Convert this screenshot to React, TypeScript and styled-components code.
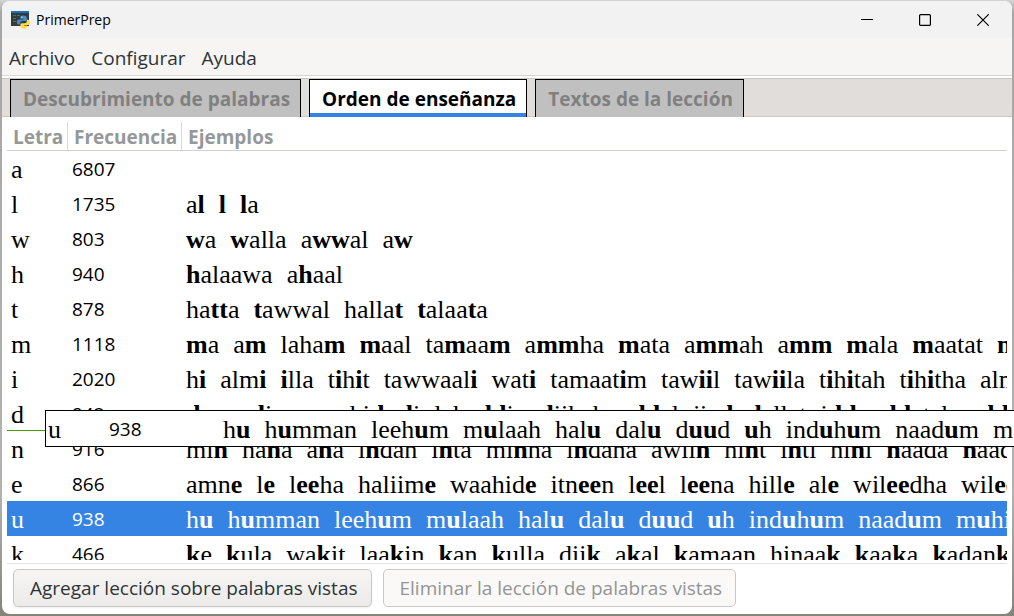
import React from 'react';
import styled, { createGlobalStyle, css } from 'styled-components';

const sans = '"Open Sans", "Noto Sans", sans-serif';
const serif = '"Liberation Serif", "Times New Roman", serif';

const GlobalStyle = createGlobalStyle`
  * { box-sizing: border-box; }
  body { margin: 0; background: #a3a3a1; font-family: ${sans}; overflow: hidden; }
  button { font-family: inherit; margin: 0; }
`;

const Desktop = styled.div`
  position: relative;
  display: flex;
  height: 100vh;
  padding: 1px 2px 2px 2px;
  overflow: hidden;
  background: linear-gradient(#d4d4d4, #a6a6a6 12px, #b2b2b2 80%, #85847b);
`;

const Window = styled.div`
  flex: 1;
  min-width: 0;
  display: flex;
  flex-direction: column;
  overflow: hidden;
  border-radius: 8px;
  background: #ffffff;
`;

const TitleBar = styled.header`
  display: flex;
  align-items: center;
  flex: none;
  height: 37px;
  padding-left: 9px;
  background: #f2f2f2;
`;

const Title = styled.h1`
  flex: 1;
  margin: 0 0 0 6px;
  font-size: 14px;
  line-height: 20px;
  font-weight: 400;
  color: #000000;
`;

const WindowButton = styled.button`
  display: flex;
  align-items: center;
  justify-content: center;
  width: 58px;
  height: 36px;
  padding: 0;
  border: 0;
  background: transparent;
`;

const MenuBar = styled.nav`
  display: flex;
  flex: none;
  height: 38px;
  padding: 3px 0 0 7px;
  gap: 16px;
  background: #f6f5f4;
  border-bottom: 1px solid #d8d5d2;
`;

const MenuItem = styled.button`
  padding: 0;
  border: 0;
  background: transparent;
  font-size: 19px;
  line-height: 26px;
  color: #2e3436;
`;

const TabStrip = styled.div`
  display: flex;
  flex: none;
  gap: 8px;
  height: 39px;
  margin-top: 2px;
  padding-left: 8px;
  background: #e1dddb;
  border-top: 1px solid #cbc5be;
  box-shadow: inset 0 -1px #cdc7c2;
`;

const Tab = styled.button<{ $active?: boolean }>`
  padding: 1px 10px 0 12px;
  border: 1px solid #000000;
  border-bottom: 0;
  background: #c0c0c0;
  color: #808080;
  font-size: 19px;
  line-height: 26px;
  font-weight: 700;
  white-space: nowrap;
  ${(p) =>
    p.$active &&
    css`
      background: #ffffff;
      color: #000000;
      box-shadow: inset 0 -4px #3584e4;
    `}
`;

const ListArea = styled.main`
  flex: 1;
  min-height: 0;
  overflow: hidden;
  margin: 5px 5px 3px;
`;

const LetterTable = styled.table`
  width: 100%;
  table-layout: fixed;
  border-collapse: separate;
  border-spacing: 0;
`;

const LetterCol = styled.col`
  width: 61px;
`;

const FrequencyCol = styled.col`
  width: 114px;
`;

const HeadCell = styled.th`
  height: 29px;
  padding: 2px 0 0 6px;
  border-bottom: 1px solid #d5d0cc;
  text-align: left;
  font-size: 19px;
  line-height: 26px;
  font-weight: 700;
  color: #949899;
  white-space: nowrap;
  &:not(:last-child) {
    box-shadow: inset -1px 0 #d9d9d9;
  }
`;

const Row = styled.tr<{ $selected?: boolean }>`
  background: ${(p) => (p.$selected ? '#3584e4' : '#ffffff')};
  color: ${(p) => (p.$selected ? '#ffffff' : '#000000')};
`;

const Cell = styled.td<{ $kind: 'letter' | 'count' | 'examples' }>`
  height: 35px;
  padding: 2px 0 0 4px;
  overflow: hidden;
  white-space: pre;
  line-height: 33px;
  font-family: ${(p) => (p.$kind === 'count' ? sans : serif)};
  font-size: ${(p) => (p.$kind === 'count' ? '19px' : '26px')};
`;

const Word = styled.span`
  margin-right: 14px;
`;

const DragLayer = styled.div`
  position: absolute;
  inset: 0;
  overflow: hidden;
  pointer-events: none;
`;

const DropMark = styled.div`
  position: absolute;
  left: 7px;
  right: 7px;
  top: 430px;
  height: 1px;
  background: #4e9a06;
`;

const DragRow = styled.div`
  position: absolute;
  left: 45px;
  right: -2px;
  top: 410px;
  overflow: hidden;
  border: 1px solid #000000;
  background: #ffffff;
`;

const DragTable = styled(LetterTable)`
  margin-left: -2px;
`;

const Footer = styled.footer`
  display: flex;
  flex: none;
  gap: 11px;
  margin: 0 5px;
  padding: 5px 6px 7px;
  border-top: 1px solid #e2e2e2;
`;

const ActionButton = styled.button`
  height: 38px;
  padding: 0 13px 0 16px;
  border: 1px solid #cdc7c2;
  border-radius: 5px;
  background: linear-gradient(#f6f5f4, #edebe9);
  box-shadow: 0 1px 2px rgba(0, 0, 0, 0.07);
  font-size: 19px;
  line-height: 26px;
  color: #2e3436;
  white-space: nowrap;
  &:disabled {
    background: #faf9f8;
    box-shadow: none;
    color: #929595;
  }
`;

type Entry = { letter: string; count: number; words: string };

const entries: Entry[] = [
  { letter: 'a', count: 6807, words: '' },
  { letter: 'l', count: 1735, words: 'al l la' },
  { letter: 'w', count: 803, words: 'wa walla awwal aw' },
  { letter: 'h', count: 940, words: 'halaawa ahaal' },
  { letter: 't', count: 878, words: 'hatta tawwal hallat talaata' },
  { letter: 'm', count: 1118, words: 'ma am laham maal tamaam ammha mata ammah amm mala maatat maa' },
  { letter: 'i', count: 2020, words: 'hi almi illa tihit tawwaali wati tamaatim tawiil tawiila tihitah tihitha almi' },
  { letter: 'd', count: 942, words: 'da andi maraahid di lahaddi adiikah addal jiad dallat idd addatah addat' },
  { letter: 'n', count: 916, words: 'min hana ana indah inta minha indaha awiin hint inti hini naada naadi' },
  { letter: 'e', count: 866, words: 'amne le leeha haliime waahide itneen leel leena hille ale wileedha wileed' },
  { letter: 'u', count: 938, words: 'hu humman leehum mulaah halu dalu duud uh induhum naadum muhimm' },
  { letter: 'k', count: 466, words: 'ke kula wakit laakin kan kulla diik akal kamaan hinaak kaaka kadanka' },
];

const selected = entries.find((e) => e.letter === 'u')!;

function Examples({ entry }: { entry: Entry }) {
  return (
    <>
      {entry.words.split(' ').filter(Boolean).map((word, i) => (
        <Word key={i}>
          {word
            .split(new RegExp(`(${entry.letter}+)`))
            .filter(Boolean)
            .map((part, j) => (part.startsWith(entry.letter) ? <b key={j}>{part}</b> : part))}
        </Word>
      ))}
    </>
  );
}

function EntryRow({ entry, isSelected }: { entry: Entry; isSelected?: boolean }) {
  return (
    <Row $selected={isSelected}>
      <Cell $kind="letter">{entry.letter}</Cell>
      <Cell $kind="count">{entry.count}</Cell>
      <Cell $kind="examples">
        <Examples entry={entry} />
      </Cell>
    </Row>
  );
}

function Columns() {
  return (
    <colgroup>
      <LetterCol />
      <FrequencyCol />
      <col />
    </colgroup>
  );
}

function AppIcon() {
  return (
    <svg width="19" height="19" viewBox="0 0 19 19" aria-hidden="true">
      <rect x="0" y="1" width="18" height="15" fill="#36393d" />
      <rect x="0" y="1" width="18" height="2" fill="#1473c4" />
      <path d="M2 5.500h3M6 5.500h3M2 8.500h3M2 11.500h3" stroke="#3f7f4c" strokeWidth="1" />
      <path
        d="M12 5.500c-2 0-2.700.8-2.700 2v1.300h3v.6H8c-1.400 0-2.200 1-2.200 2.600s.8 2.600 2 2.600h1.400v-1.500c0-1.200.9-2 2-2h2.900c1 0 1.700-.8 1.700-1.800V7.500c0-1.300-1.200-2-3.800-2z"
        fill="#4a8cc2"
      />
      <path
        d="M13.300 18.800c2 0 2.700-.8 2.700-2v-1.200h-3V15h4c1.300 0 2-1 2-2.600s-.7-2.600-2-2.600h-1.200v1.500c0 1.200-.9 2-2 2H11c-1 0-1.600.8-1.600 1.800v1.700c0 1.300 1.300 2 3.900 2z"
        fill="#ffdc4a"
      />
      <circle cx="10.800" cy="7.200" r=".6" fill="#ffffff" />
    </svg>
  );
}

export default function App() {
  return (
    <Desktop>
      <GlobalStyle />
      <Window>
        <TitleBar>
          <AppIcon />
          <Title>PrimerPrep</Title>
          <WindowButton aria-label="Minimizar">
            <svg width="12" height="12" viewBox="0 0 12 12">
              <path d="M0 5.500h12" stroke="#000000" />
            </svg>
          </WindowButton>
          <WindowButton aria-label="Maximizar">
            <svg width="12" height="12" viewBox="0 0 12 12">
              <rect x=".6" y=".6" width="10.800" height="10.800" rx="1" fill="none" stroke="#000000" strokeWidth="1.200" />
            </svg>
          </WindowButton>
          <WindowButton aria-label="Cerrar">
            <svg width="12" height="12" viewBox="0 0 12 12">
              <path d="M.3.3l11.400 11.400M11.700.3L.3 11.700" stroke="#000000" strokeWidth="1.200" />
            </svg>
          </WindowButton>
        </TitleBar>
        <MenuBar>
          <MenuItem>Archivo</MenuItem>
          <MenuItem>Configurar</MenuItem>
          <MenuItem>Ayuda</MenuItem>
        </MenuBar>
        <TabStrip role="tablist">
          <Tab role="tab" aria-selected={false}>Descubrimiento de palabras</Tab>
          <Tab role="tab" aria-selected $active>Orden de enseñanza</Tab>
          <Tab role="tab" aria-selected={false}>Textos de la lección</Tab>
        </TabStrip>
        <ListArea>
          <LetterTable>
            <Columns />
            <thead>
              <tr>
                <HeadCell scope="col">Letra</HeadCell>
                <HeadCell scope="col">Frecuencia</HeadCell>
                <HeadCell scope="col">Ejemplos</HeadCell>
              </tr>
            </thead>
            <tbody>
              {entries.map((entry) => (
                <EntryRow key={entry.letter} entry={entry} isSelected={entry === selected} />
              ))}
            </tbody>
          </LetterTable>
        </ListArea>
        <Footer>
          <ActionButton>Agregar lección sobre palabras vistas</ActionButton>
          <ActionButton disabled>Eliminar la lección de palabras vistas</ActionButton>
        </Footer>
      </Window>
      <DragLayer>
        <DropMark />
        <DragRow>
          <DragTable>
            <Columns />
            <tbody>
              <EntryRow entry={selected} />
            </tbody>
          </DragTable>
        </DragRow>
      </DragLayer>
    </Desktop>
  );
}
